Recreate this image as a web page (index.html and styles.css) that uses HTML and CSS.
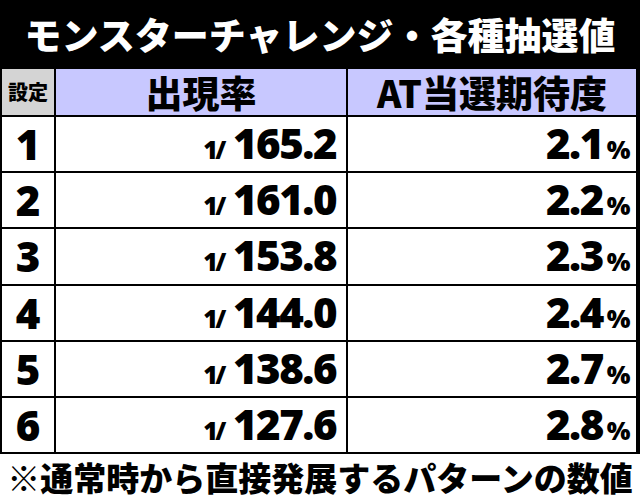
FILE: index.html
```html
<!DOCTYPE html>
<html lang="ja">
<head>
<meta charset="utf-8">
<title>モンスターチャレンジ・各種抽選値</title>
<link rel="stylesheet" href="styles.css">
</head>
<body>
<div class="board">
  <h1 class="title">モンスターチャレンジ・各種抽選値</h1>
  <div class="table">
    <div class="cell head setting">設定</div>
    <div class="cell head">出現率</div>
    <div class="cell head">AT当選期待度</div>

    <div class="cell num">1</div>
    <div class="cell rate"><span class="small">1/</span><span class="big">165.2</span></div>
    <div class="cell pct"><span class="big">2.1</span><span class="small">%</span></div>

    <div class="cell num">2</div>
    <div class="cell rate"><span class="small">1/</span><span class="big">161.0</span></div>
    <div class="cell pct"><span class="big">2.2</span><span class="small">%</span></div>

    <div class="cell num">3</div>
    <div class="cell rate"><span class="small">1/</span><span class="big">153.8</span></div>
    <div class="cell pct"><span class="big">2.3</span><span class="small">%</span></div>

    <div class="cell num">4</div>
    <div class="cell rate"><span class="small">1/</span><span class="big">144.0</span></div>
    <div class="cell pct"><span class="big">2.4</span><span class="small">%</span></div>

    <div class="cell num">5</div>
    <div class="cell rate"><span class="small">1/</span><span class="big">138.6</span></div>
    <div class="cell pct"><span class="big">2.7</span><span class="small">%</span></div>

    <div class="cell num">6</div>
    <div class="cell rate"><span class="small">1/</span><span class="big">127.6</span></div>
    <div class="cell pct"><span class="big">2.8</span><span class="small">%</span></div>
  </div>
</div>
<p class="note">※通常時から直接発展するパターンの数値</p>
</body>
</html>
```
FILE: styles.css
```css
html, body {
  margin: 0;
  padding: 0;
  background: #fff;
}
body {
  width: 640px;
  height: 500px;
  overflow: hidden;
  font-family: "Noto Sans CJK JP", "Noto Sans", sans-serif;
  color: #000;
}
.board {
  background: #000;
}
.title {
  margin: 0;
  height: 69px;
  line-height: 69px;
  font-size: 37px;
  font-weight: 900;
  color: #fff;
  text-align: center;
  white-space: nowrap;
}
.table {
  display: grid;
  grid-template-columns: 52px 290px 1fr;
  grid-template-rows: 46px repeat(6, minmax(0, 1fr));
  gap: 2px;
  height: 383px;
  padding: 0 4px 2px 2px;
}
.cell {
  background: #fff;
  display: flex;
  align-items: center;
  min-height: 0;
}
.head {
  background: #c8c8ff;
  justify-content: center;
  font-size: 37px;
  font-weight: 900;
  line-height: 44px;
}
.head.setting {
  background: #d4d4d4;
  font-size: 20px;
}
.num {
  justify-content: center;
  font-family: "Open Sans", "DejaVu Sans", sans-serif;
  font-weight: 800;
  font-size: 42px;
  line-height: 52px;
}
.rate, .pct {
  justify-content: flex-end;
  align-items: baseline;
  font-family: "Open Sans", "DejaVu Sans", sans-serif;
  font-weight: 800;
  line-height: 52px;
}
.rate {
  padding-right: 10px;
}
.pct {
  padding-right: 8px;
}
.big {
  font-size: 42px;
  letter-spacing: -1.5px;
}
.small {
  font-size: 25px;
  letter-spacing: -2.5px;
}
.rate .small {
  margin-right: 9px;
}
.pct .small {
  margin-left: 4px;
}
.note {
  margin: 0;
  height: 46px;
  line-height: 46px;
  font-size: 33px;
  font-weight: 900;
  text-align: center;
  white-space: nowrap;
}
```
